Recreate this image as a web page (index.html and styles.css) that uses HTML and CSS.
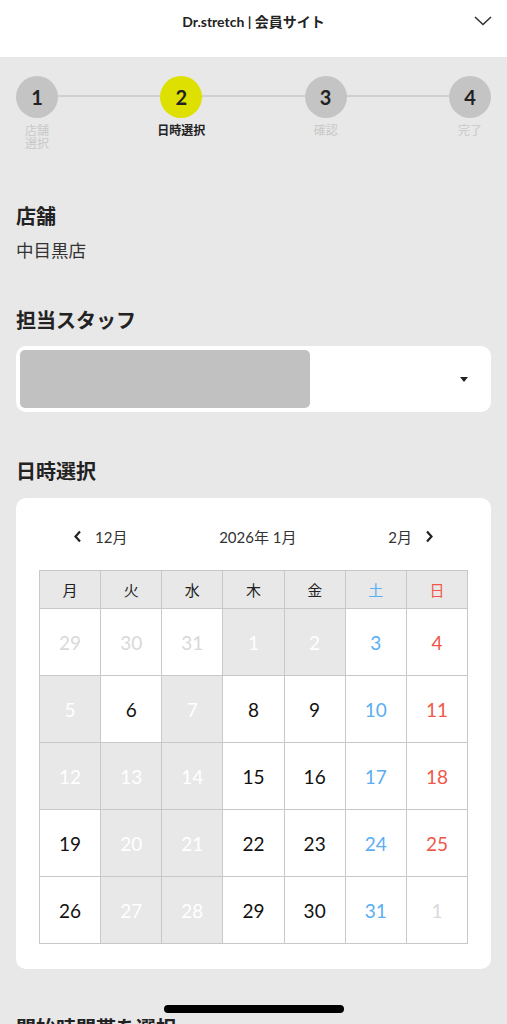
FILE: index.html
```html
<!DOCTYPE html>
<html lang="ja">
<head>
    <meta charset="UTF-8">
    <meta name="viewport" content="width=device-width, initial-scale=1.0">
    <title>Dr.stretch | 会員サイト</title>
    <link rel="stylesheet" href="styles.css">
</head>
<body>

<header class="topbar">
    <span></span>
    <div class="topbar-title">Dr.stretch | 会員サイト</div>
    <svg class="topbar-menu" width="18" height="10" viewBox="0 0 18 10">
        <path d="M1 1 L9 8.5 L17 1" fill="none" stroke="#333" stroke-width="1.6"/>
    </svg>
</header>

<main class="content">

    <!-- Steps -->
    <div class="steps">
        <div class="step">
            <div class="step-num">1</div>
            <div class="step-label">店舗<br>選択</div>
        </div>
        <div class="step active">
            <div class="step-num">2</div>
            <div class="step-label">日時選択</div>
        </div>
        <div class="step">
            <div class="step-num">3</div>
            <div class="step-label">確認</div>
        </div>
        <div class="step">
            <div class="step-num">4</div>
            <div class="step-label">完了</div>
        </div>
    </div>

    <h2 class="section-title shop-title">店舗</h2>
    <p class="shop-name">中目黒店</p>

    <h2 class="section-title staff-title">担当スタッフ</h2>
    <div class="select-box">
        <div class="select-value"></div>
        <svg class="select-caret" width="8" height="5" viewBox="0 0 8 5">
            <path d="M0 0 H8 L4 5 Z" fill="#222"/>
        </svg>
    </div>

    <h2 class="section-title date-title">日時選択</h2>
    <div class="calendar-card">
        <div class="cal-nav">
            <div class="cal-nav-side">
                <svg width="9" height="13" viewBox="0 0 9 13"><path d="M7 1.5 L2.5 6.5 L7 11.5" fill="none" stroke="#222" stroke-width="2.2"/></svg>
                <span>12月</span>
            </div>
            <div class="cal-nav-current">2026年 1月</div>
            <div class="cal-nav-side">
                <span>2月</span>
                <svg width="9" height="13" viewBox="0 0 9 13"><path d="M2 1.5 L6.5 6.5 L2 11.5" fill="none" stroke="#222" stroke-width="2.2"/></svg>
            </div>
        </div>

        <table class="calendar">
            <thead>
                <tr>
                    <th>月</th>
                    <th>火</th>
                    <th>水</th>
                    <th>木</th>
                    <th>金</th>
                    <th class="sat">土</th>
                    <th class="sun">日</th>
                </tr>
            </thead>
            <tbody>
                <tr>
                    <td class="other">29</td>
                    <td class="other">30</td>
                    <td class="other">31</td>
                    <td class="off">1</td>
                    <td class="off">2</td>
                    <td class="sat">3</td>
                    <td class="sun">4</td>
                </tr>
                <tr>
                    <td class="off">5</td>
                    <td>6</td>
                    <td class="off">7</td>
                    <td>8</td>
                    <td>9</td>
                    <td class="sat">10</td>
                    <td class="sun">11</td>
                </tr>
                <tr>
                    <td class="off">12</td>
                    <td class="off">13</td>
                    <td class="off">14</td>
                    <td>15</td>
                    <td>16</td>
                    <td class="sat">17</td>
                    <td class="sun">18</td>
                </tr>
                <tr>
                    <td>19</td>
                    <td class="off">20</td>
                    <td class="off">21</td>
                    <td>22</td>
                    <td>23</td>
                    <td class="sat">24</td>
                    <td class="sun">25</td>
                </tr>
                <tr>
                    <td>26</td>
                    <td class="off">27</td>
                    <td class="off">28</td>
                    <td>29</td>
                    <td>30</td>
                    <td class="sat">31</td>
                    <td class="other">1</td>
                </tr>
            </tbody>
        </table>
    </div>

    <h2 class="section-title time-title">開始時間帯を選択</h2>
</main>

<div class="home-indicator"></div>

</body>
</html>
```

FILE: styles.css
```css
body {
    margin: 0;
    background-color: #e8e8e8;
    font-family: 'Lato', 'Noto Sans CJK JP', sans-serif;
    color: #222;
}

.topbar {
    display: grid;
    grid-template-columns: 1fr auto 1fr;
    align-items: center;
    height: 57px;
    padding-bottom: 15px;
    box-sizing: border-box;
    background-color: #fff;
}

.topbar-title {
    font-size: 14px;
    font-weight: bold;
    color: #222;
}

.topbar-menu {
    justify-self: end;
    margin-right: 15px;
}

.content {
    padding: 0 16px;
}

/* steps */
.steps {
    position: relative;
    display: flex;
    justify-content: space-between;
    padding-top: 19px;
}

.steps::before {
    content: "";
    position: absolute;
    top: 38px;
    left: 30px;
    right: 30px;
    height: 2px;
    background-color: #cfcfcf;
}

.step {
    position: relative;
    width: 42px;
    display: flex;
    flex-direction: column;
    align-items: center;
}

.step-num {
    width: 42px;
    height: 42px;
    border-radius: 50%;
    background-color: #c4c4c4;
    display: flex;
    align-items: center;
    justify-content: center;
    font-size: 20px;
    font-weight: bold;
    color: #222;
}

.step.active .step-num {
    background-color: #dde000;
}

.step-label {
    margin-top: 6px;
    font-size: 12px;
    line-height: 13px;
    white-space: nowrap;
    text-align: center;
    color: #c9c9c9;
}

.step.active .step-label {
    color: #222;
    font-weight: bold;
}

/* sections */
.section-title {
    margin: 0;
    font-size: 20px;
    line-height: 26px;
    font-weight: bold;
    color: #222;
}

.shop-title {
    margin-top: 53px;
}

.staff-title {
    margin-top: 44px;
}

.date-title {
    margin-top: 46px;
}

.time-title {
    margin-top: 46px;
}

.shop-name {
    margin: 10px 0 0;
    font-size: 17.5px;
    line-height: 24px;
    color: #333;
}

.select-box {
    margin-top: 13px;
    height: 66px;
    background-color: #fff;
    border-radius: 10px;
    display: flex;
    align-items: center;
    justify-content: space-between;
    padding: 0 23px 0 4px;
}

.select-value {
    width: 290px;
    height: 58px;
    background-color: #c1c1c1;
    border-radius: 5px;
}

.calendar-card {
    margin-top: 14px;
    background-color: #fff;
    border-radius: 10px;
    padding: 26px 23px 25px;
}

.cal-nav {
    display: flex;
    justify-content: space-between;
    align-items: center;
    padding: 0 34px;
    font-size: 15px;
    color: #333;
    height: 24px;
}

.cal-nav-side {
    display: flex;
    align-items: center;
    gap: 13px;
}

.calendar {
    margin-top: 22px;
    width: 100%;
    border-collapse: collapse;
    table-layout: fixed;
}

.calendar th,
.calendar td {
    border: 1px solid #c8c8c8;
    text-align: center;
    padding: 0;
}

.calendar th {
    height: 37px;
    background-color: #e8e8e8;
    font-size: 15px;
    font-weight: normal;
    color: #222;
}

.calendar td {
    height: 66px;
    font-size: 19px;
    color: #111;
    background-color: #fff;
}

.calendar .sat {
    color: #5aaef2;
}

.calendar .sun {
    color: #f0574a;
}

.calendar td.other {
    color: #d9d9d9;
}

.calendar td.off {
    background-color: #e8e8e8;
    color: #fff;
}

.home-indicator {
    position: fixed;
    bottom: 11px;
    left: 164px;
    width: 180px;
    height: 8px;
    border-radius: 4px;
    background-color: #000;
}
```
